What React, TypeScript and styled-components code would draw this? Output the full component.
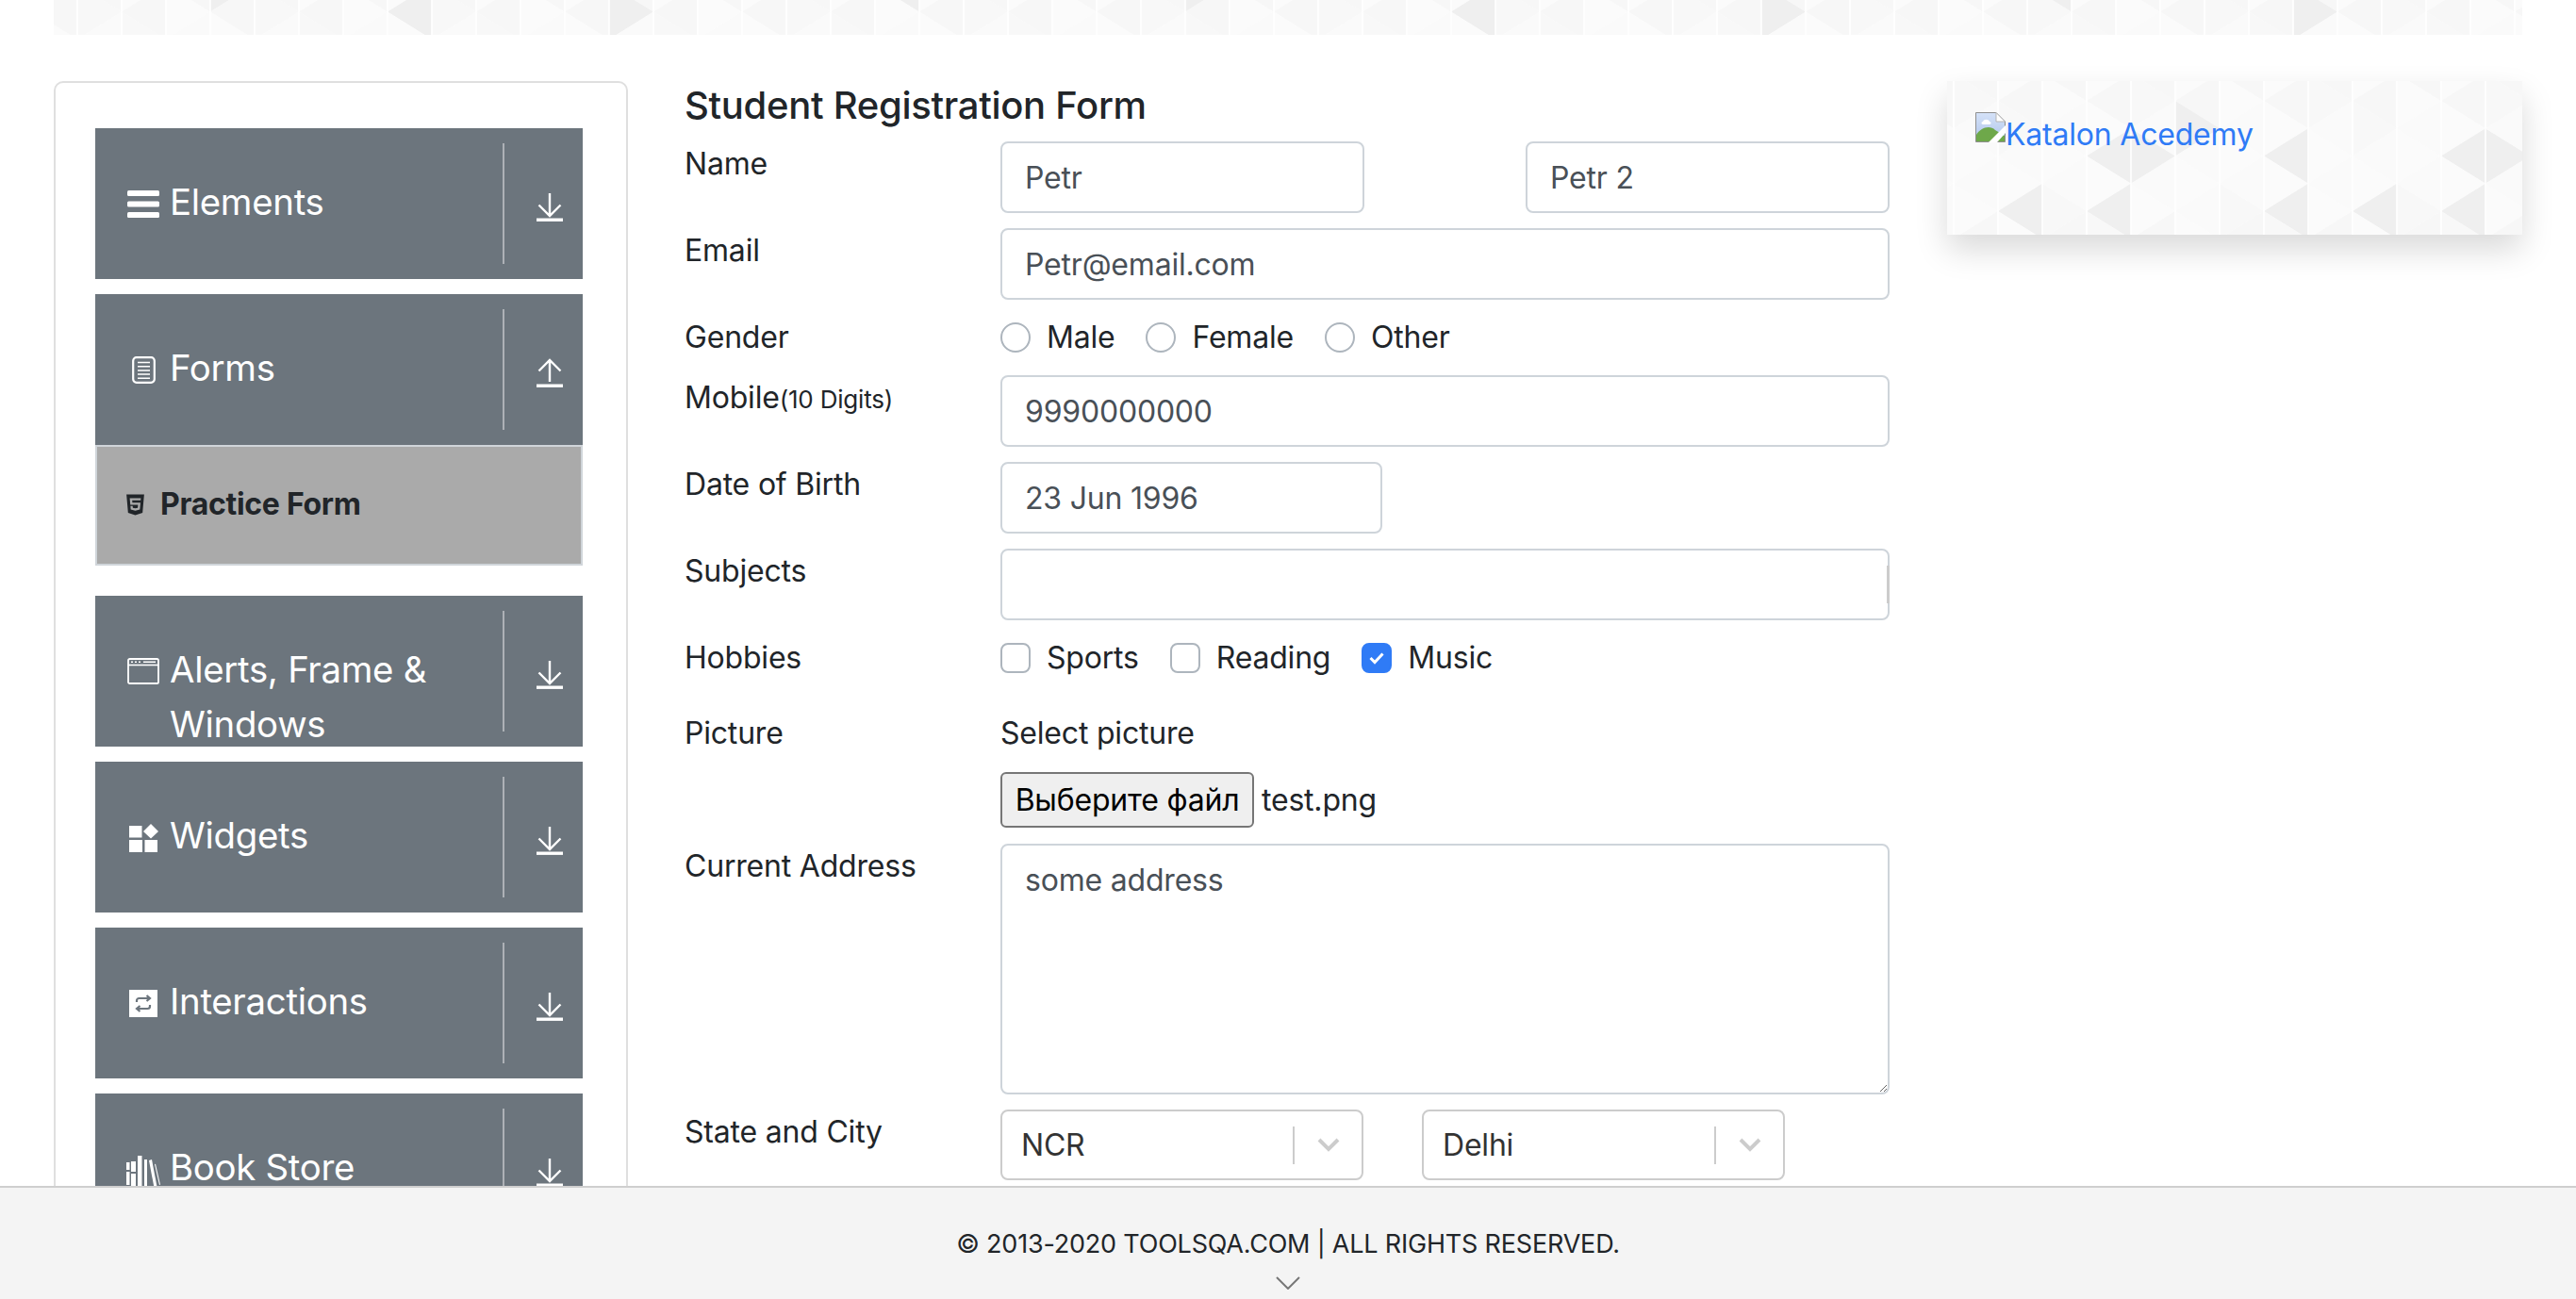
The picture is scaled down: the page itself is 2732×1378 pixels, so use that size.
import styled, { createGlobalStyle } from "styled-components";
import { FaHtml5 } from "react-icons/fa";
import type { ReactNode } from "react";

const STEP_X = 47;
const STEP_Y = 58.5;

function TrianglePattern({
  x0,
  y0,
  lines,
  rows,
  dark,
}: {
  x0: number;
  y0: number;
  lines: number;
  rows: number;
  dark: string[];
}) {
  const vertex = (i: number, k: number) =>
    y0 + k * STEP_Y + (i % 2 === 0 ? STEP_Y / 2 : 0);
  const items: ReactNode[] = [];
  for (let i = -1; i < lines; i++) {
    const left = x0 + i * STEP_X;
    const right = left + STEP_X;
    for (let k = -1; k < rows; k++) {
      const a = [vertex(i, k), vertex(i, k + 1)];
      const b = [vertex(i + 1, k), vertex(i + 1, k + 1)];
      const keyA = `${i}:${k}:A`;
      const keyB = `${i}:${k}:B`;
      const shadeA = (i * 5 + k * 3) % 4 === 0 ? "#f8f8f8" : "#fbfbfb";
      const shadeB = (i * 3 + k * 7) % 3 === 0 ? "#f7f7f7" : "#fafafa";
      items.push(
        <polygon
          key={keyA}
          points={`${left},${a[0]} ${left},${a[1]} ${right},${(a[0] + a[1]) / 2}`}
          fill={dark.includes(keyA) ? "#efefef" : shadeA}
        />,
        <polygon
          key={keyB}
          points={`${right},${b[0]} ${right},${b[1]} ${left},${(b[0] + b[1]) / 2}`}
          fill={dark.includes(keyB) ? "#efefef" : shadeB}
        />,
      );
    }
    items.push(
      <line
        key={`line-${i}`}
        x1={left}
        x2={left}
        y1={0}
        y2={rows * STEP_Y}
        stroke="#fff"
        strokeOpacity={0.8}
        strokeWidth={2}
      />,
    );
  }
  return <PatternSvg aria-hidden="true">{items}</PatternSvg>;
}

function ArrowIcon({ up }: { up?: boolean }) {
  return (
    <svg width="28" height="31" viewBox="0 0 28 31" fill="none" stroke="#fff">
      <g strokeWidth="2.4">
        {up ? (
          <path d="M14 25V2M2.5 13.5L14 2l11.5 11.5" />
        ) : (
          <path d="M14 1v24M2.5 13.5L14 25l11.5-11.5" />
        )}
      </g>
      <path d="M0 29.2h28" strokeWidth="3.4" />
    </svg>
  );
}

function BarsIcon() {
  return (
    <svg width="34" height="29" viewBox="0 0 34 29" fill="#fff">
      <rect x="0" y="0" width="34" height="6" rx="1.5" />
      <rect x="0" y="11.5" width="34" height="6" rx="1.5" />
      <rect x="0" y="23" width="34" height="6" rx="1.5" />
    </svg>
  );
}

function FormIcon() {
  return (
    <svg width="25" height="29" viewBox="0 0 25 29" fill="none" stroke="#fff">
      <rect x="1.2" y="1.2" width="22.6" height="26.6" rx="3.5" strokeWidth="2.2" />
      <path d="M6 6.5h13M6 10.7h13M6 14.9h13M6 19.1h13M6 23.3h13" strokeWidth="1.5" />
    </svg>
  );
}

function WindowIcon() {
  return (
    <svg width="34" height="28" viewBox="0 0 34 28" fill="none" stroke="#fff">
      <rect x="1" y="1" width="32" height="26" rx="1.6" strokeWidth="1.8" />
      <path d="M1 7.5h32" strokeWidth="1.6" />
      <path d="M4 4.2h2M8 4.2h2M12 4.2h2M17 4.2h13" strokeWidth="1.6" />
    </svg>
  );
}

function WidgetsIcon() {
  return (
    <svg width="31" height="30" viewBox="0 0 31 30" fill="#fff">
      <rect x="0" y="2" width="13.5" height="12.5" />
      <rect x="0" y="17" width="14" height="13" />
      <rect x="16.5" y="17" width="13.5" height="13" />
      <path d="M23 0l8 8-8 7.5L15 8z" />
    </svg>
  );
}

function SwapIcon() {
  return (
    <svg width="30" height="29" viewBox="0 0 30 29">
      <rect width="30" height="29" fill="#fff" />
      <path
        d="M8 13v-1.5C8 10 9 9 10.5 9H21M18.5 6l3.5 3-3.5 3M22 16v1.5c0 1.5-1 2.5-2.5 2.5H9M11.5 17L8 20l3.5 3"
        fill="none"
        stroke="#6c757d"
        strokeWidth="2.2"
      />
    </svg>
  );
}

function BooksIcon() {
  return (
    <svg width="36" height="42" viewBox="0 0 36 42" fill="#fff">
      <path d="M0 7h3.5v8H0zM0 17h3.5v14H0zM0 33h3.5v9H0z" />
      <path d="M5 6h5v11H5zM5 19h5v23H5z" />
      <path d="M12 0h4.5v42H12z" />
      <path d="M19 4h3v38h-3z" />
      <path d="M24 5l3-1 7 37-3 1z" />
      <path d="M30 9l1-.3 5 22-1 .3z" />
    </svg>
  );
}

function BrokenImageIcon() {
  return (
    <svg width="32" height="32" viewBox="0 0 32 32">
      <defs>
        <linearGradient id="sky" x1="0" y1="0" x2="0" y2="1">
          <stop offset="0" stopColor="#d5e2f8" />
          <stop offset="1" stopColor="#aec4ea" />
        </linearGradient>
      </defs>
      <path d="M.5.5H22L31.5 10v21.5H.5z" fill="url(#sky)" stroke="#8f8f8f" />
      <path d="M22 .5V10h9.5z" fill="#fff" stroke="#b5b5b5" />
      <path d="M8 10c1-3 6-3 7 0 2 0 2 3 0 3H8c-2 0-2-3 0-3z" fill="#fff" />
      <path d="M1 31V24C5 17 15 13 21 19l10 6v6z" fill="#6ea84a" />
      <path d="M14 32l18-18v8L23 32z" fill="#fff" />
    </svg>
  );
}

function ChevronIcon() {
  return (
    <svg width="24" height="15" viewBox="0 0 24 15" fill="none" stroke="#ccc">
      <path d="M2 2l10 10L22 2" strokeWidth="4" />
    </svg>
  );
}

function CheckIcon() {
  return (
    <svg width="18" height="14" viewBox="0 0 18 14" fill="none" stroke="#fff">
      <path d="M2.5 7l4.5 4.5 8.5-9" strokeWidth="3" />
    </svg>
  );
}

const menu: { title: string; icon: ReactNode; open?: boolean }[] = [
  { title: "Elements", icon: <BarsIcon /> },
  { title: "Forms", icon: <FormIcon />, open: true },
  { title: "Alerts, Frame & Windows", icon: <WindowIcon /> },
  { title: "Widgets", icon: <WidgetsIcon /> },
  { title: "Interactions", icon: <SwapIcon /> },
  { title: "Book Store", icon: <BooksIcon /> },
];

export default function App() {
  return (
    <Page>
      <GlobalStyle />
      <Banner>
        <TrianglePattern x0={25} y0={-46} lines={57} rows={2} dark={["3:0:A", "7:0:B", "12:0:A", "18:0:B", "25:0:A", "31:0:B", "38:0:A", "44:0:B", "50:0:A"]} />
      </Banner>
      <Columns>
        <Sidebar>
          {menu.map((item) => (
            <MenuGroup key={item.title}>
              <MenuButton>
                <MenuHead>
                  <MenuIcon>{item.icon}</MenuIcon>
                  <MenuTitle>{item.title}</MenuTitle>
                </MenuHead>
                <MenuDivider />
                <MenuArrow>
                  <ArrowIcon up={item.open} />
                </MenuArrow>
              </MenuButton>
              {item.open && (
                <SubItem>
                  <FaHtml5 size={25} />
                  Practice Form
                </SubItem>
              )}
            </MenuGroup>
          ))}
        </Sidebar>

        <FormColumn>
          <FormTitle>Student Registration Form</FormTitle>

          <FormRow>
            <FieldLabel>Name</FieldLabel>
            <SplitControls $gap={171}>
              <TextInput $width={386} readOnly value="Petr" />
              <TextInput $width={386} readOnly value="Petr 2" />
            </SplitControls>
          </FormRow>

          <FormRow>
            <FieldLabel>Email</FieldLabel>
            <TextInput readOnly value="Petr@email.com" />
          </FormRow>

          <FormRow>
            <FieldLabel>Gender</FieldLabel>
            <Options>
              <Option $gap={33}>
                <Radio />
                Male
              </Option>
              <Option $gap={33}>
                <Radio />
                Female
              </Option>
              <Option>
                <Radio />
                Other
              </Option>
            </Options>
          </FormRow>

          <FormRow>
            <FieldLabel>
              Mobile<LabelHint>(10 Digits)</LabelHint>
            </FieldLabel>
            <TextInput readOnly value="9990000000" />
          </FormRow>

          <FormRow>
            <FieldLabel>Date of Birth</FieldLabel>
            <TextInput $width={405} readOnly value="23 Jun 1996" />
          </FormRow>

          <FormRow>
            <FieldLabel>Subjects</FieldLabel>
            <SubjectsBox>
              <TextInput readOnly value="" />
              <ScrollStub />
            </SubjectsBox>
          </FormRow>

          <FormRow $bottom={32}>
            <FieldLabel>Hobbies</FieldLabel>
            <Options>
              <Option $gap={33}>
                <CheckBox />
                Sports
              </Option>
              <Option $gap={33}>
                <CheckBox />
                Reading
              </Option>
              <Option>
                <CheckBox $checked>
                  <CheckIcon />
                </CheckBox>
                Music
              </Option>
            </Options>
          </FormRow>

          <FormRow>
            <FieldLabel>Picture</FieldLabel>
            <PictureBox>
              <PictureHint>Select picture</PictureHint>
              <FileRow>
                <FileButton type="button">Выберите файл</FileButton>
                test.png
              </FileRow>
            </PictureBox>
          </FormRow>

          <FormRow>
            <FieldLabel>Current Address</FieldLabel>
            <AddressArea readOnly value="some address" />
          </FormRow>

          <FormRow>
            <FieldLabel>State and City</FieldLabel>
            <SplitControls $gap={62}>
              <SelectBox>
                <SelectValue>NCR</SelectValue>
                <SelectDivider />
                <SelectArrow>
                  <ChevronIcon />
                </SelectArrow>
              </SelectBox>
              <SelectBox>
                <SelectValue>Delhi</SelectValue>
                <SelectDivider />
                <SelectArrow>
                  <ChevronIcon />
                </SelectArrow>
              </SelectBox>
            </SplitControls>
          </FormRow>
        </FormColumn>

        <AdCard>
          <TrianglePattern
            x0={7}
            y0={-37.5}
            lines={14}
            rows={4}
            dark={["7:1:B", "11:1:B", "12:1:A", "7:2:B", "9:2:B", "11:2:B", "5:1:A", "3:1:B", "4:1:A", "1:2:B", "3:2:B"]}
          />
          <AdLink href="#">
            <BrokenImageIcon />
            Katalon Acedemy
          </AdLink>
        </AdCard>
      </Columns>

      <Footer>
        <FooterText>© 2013-2020 TOOLSQA.COM | ALL RIGHTS RESERVED.</FooterText>
        <FooterChevron viewBox="0 0 26 14" fill="none" stroke="#777">
          <path d="M1 1l12 12L25 1" strokeWidth="2" />
        </FooterChevron>
      </Footer>
    </Page>
  );
}

const GlobalStyle = createGlobalStyle`
  html, body {
    margin: 0;
    padding: 0;
    background: #fff;
  }
  * {
    box-sizing: border-box;
  }
`;

const Page = styled.div`
  position: relative;
  height: 1378px;
  overflow: hidden;
  padding: 0 57px;
  font-family: Inter, "Liberation Sans", sans-serif;
  font-size: 32px;
  line-height: 48px;
  letter-spacing: -0.2px;
  color: #212529;
`;

const PatternSvg = styled.svg`
  position: absolute;
  inset: 0;
  width: 100%;
  height: 100%;
  filter: blur(0.7px);
`;

const Banner = styled.div`
  position: relative;
  height: 37px;
  overflow: hidden;
  background: #fafafa;
`;

const Columns = styled.div`
  display: flex;
  align-items: flex-start;
  margin-top: 49px;
`;

const Sidebar = styled.aside`
  flex: 0 0 609px;
  padding: 48px 46px 48px 42px;
  border: 2px solid #dfdfdf;
  border-radius: 10px;
`;

const MenuGroup = styled.div`
  margin-bottom: 16px;

  &:nth-child(2) {
    margin-bottom: 32px;
  }
`;

const MenuButton = styled.div`
  display: flex;
  height: 160px;
  overflow: hidden;
  background: #6c757d;
  color: #fff;
`;

const MenuHead = styled.div`
  flex: 1;
  display: flex;
  align-items: flex-start;
  padding: 49px 0 0 32px;
`;

const MenuIcon = styled.span`
  flex: 0 0 38px;
  display: flex;
  justify-content: center;
  margin-top: 17px;
`;

const MenuTitle = styled.div`
  margin-left: 9px;
  font-size: 38.4px;
  line-height: 58px;
  letter-spacing: -0.3px;
`;

const MenuDivider = styled.span`
  flex: 0 0 2px;
  margin: 16px 0;
  background: #adb1b6;
`;

const MenuArrow = styled.span`
  flex: 0 0 83px;
  padding: 68px 0 0 34px;
  line-height: 0;
`;

const SubItem = styled.div`
  display: flex;
  align-items: center;
  gap: 14px;
  height: 128px;
  padding-left: 28px;
  padding-bottom: 2px;
  border: 2px solid #d0d5da;
  background: #aaaaaa;
  font-weight: 700;
  letter-spacing: -0.3px;
`;

const FormColumn = styled.main`
  flex: 0 0 1278px;
  margin: 2px 61px 0 60px;
`;

const FormTitle = styled.h1`
  margin: 0 0 14px;
  font-size: 40px;
  line-height: 48px;
  font-weight: 500;
  letter-spacing: -0.3px;
`;

const FormRow = styled.div<{ $bottom?: number }>`
  display: flex;
  align-items: flex-start;
  margin-bottom: ${(props) => props.$bottom ?? 16}px;
`;

const FieldLabel = styled.label`
  flex: 0 0 335px;
`;

const LabelHint = styled.small`
  font-size: 26px;
`;

const SplitControls = styled.div<{ $gap: number }>`
  flex: 1;
  display: flex;
  gap: ${(props) => props.$gap}px;
`;

const TextInput = styled.input<{ $width?: number }>`
  display: block;
  width: ${(props) => (props.$width ? `${props.$width}px` : "943px")};
  height: 76px;
  padding: 0 24px;
  border: 2px solid #ced4da;
  border-radius: 8px;
  outline: none;
  background: #fff;
  color: #495057;
  font: inherit;
  letter-spacing: inherit;
`;

const Options = styled.div`
  display: flex;
  align-items: center;
  height: 48px;
`;

const Option = styled.span<{ $gap?: number }>`
  display: flex;
  align-items: center;
  gap: 17px;
  margin-right: ${(props) => props.$gap ?? 0}px;
`;

const Radio = styled.span`
  width: 32px;
  height: 32px;
  border: 2px solid #adb5bd;
  border-radius: 50%;
`;

const CheckBox = styled.span<{ $checked?: boolean }>`
  display: flex;
  align-items: center;
  justify-content: center;
  width: 32px;
  height: 32px;
  border: 2px solid ${(props) => (props.$checked ? "#2f7bf6" : "#adb5bd")};
  border-radius: 8px;
  background: ${(props) => (props.$checked ? "#2f7bf6" : "#fff")};
`;

const SubjectsBox = styled.div`
  position: relative;
`;

const ScrollStub = styled.span`
  position: absolute;
  top: 18px;
  right: 0;
  width: 3px;
  height: 40px;
  background: #cccccc;
`;

const PictureBox = styled.div`
  display: flex;
  flex-direction: column;
  gap: 16px;
`;

const PictureHint = styled.span``;

const FileRow = styled.div`
  display: flex;
  align-items: center;
  gap: 8px;
  height: 61px;
`;

const FileButton = styled.button`
  width: 269px;
  height: 59px;
  padding: 0;
  border: 2px solid #767676;
  border-radius: 6px;
  background: #efefef;
  color: #000;
  font: inherit;
  letter-spacing: inherit;
`;

const AddressArea = styled.textarea`
  display: block;
  width: 943px;
  height: 266px;
  padding: 13px 24px;
  border: 2px solid #ced4da;
  border-radius: 8px;
  outline: none;
  color: #495057;
  font: inherit;
  letter-spacing: inherit;
`;

const SelectBox = styled.div`
  display: flex;
  align-items: center;
  width: 385px;
  height: 75px;
  padding-left: 20px;
  border: 2px solid #cccccc;
  border-radius: 8px;
  color: #333333;
`;

const SelectValue = styled.span`
  flex: 1;
`;

const SelectDivider = styled.span`
  width: 2px;
  height: 40px;
  background: #cccccc;
`;

const SelectArrow = styled.span`
  flex: 0 0 71px;
  display: flex;
  justify-content: center;
`;

const AdCard = styled.aside`
  position: relative;
  flex: 0 0 610px;
  height: 163px;
  padding: 33px 30px;
  overflow: visible;
  background: #fafafa;
  box-shadow: 0 16px 32px rgba(0, 0, 0, 0.15);
  clip-path: inset(-60px -60px -60px -60px);
`;

const AdLink = styled.a`
  position: relative;
  display: flex;
  align-items: flex-start;
  color: #2f7bf6;
  text-decoration: none;
`;

const Footer = styled.footer`
  position: absolute;
  left: 0;
  right: 0;
  bottom: 0;
  display: flex;
  flex-direction: column;
  align-items: center;
  height: 120px;
  padding-top: 42px;
  border-top: 2px solid #cfcfcf;
  background: #f4f4f4;
`;

const FooterText = styled.div`
  font-size: 27px;
  line-height: 36px;
`;

const FooterChevron = styled.svg`
  width: 26px;
  height: 14px;
  margin-top: 16px;
`;
